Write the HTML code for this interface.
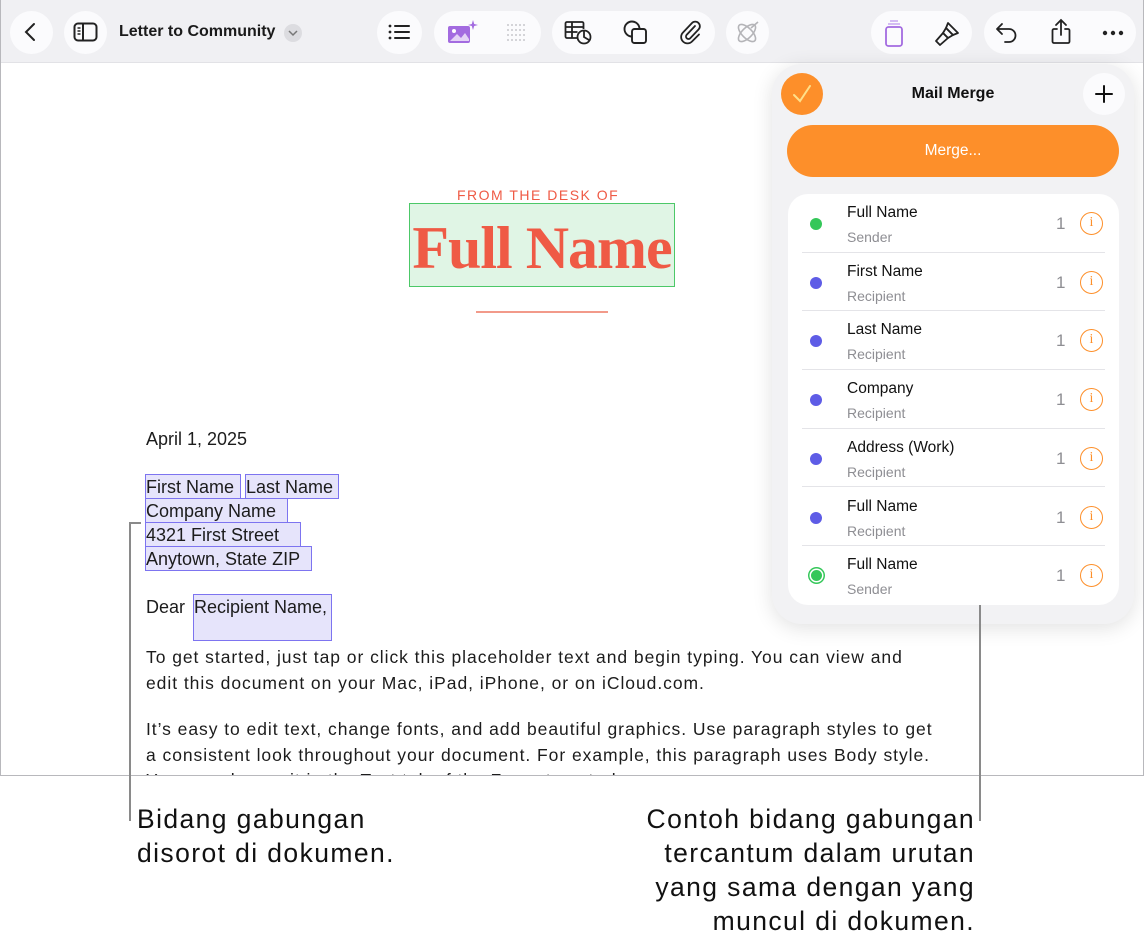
<!DOCTYPE html>
<html><head><meta charset="utf-8"><style>
*{margin:0;padding:0;box-sizing:border-box}
body{width:1144px;height:947px;background:#fff;position:relative;overflow:hidden;font-family:"Liberation Sans",sans-serif;color:#1a1a1a}
.abs{position:absolute}
.screen{position:absolute;left:0;top:0;width:1144px;height:776px;border:1px solid #b8b8bc;border-top:none;background:#fff;overflow:hidden}
.tb{position:absolute;left:0;top:0;width:1144px;height:63px;background:#f0f0f3;border-bottom:1px solid #e2e2e6}
.btn{position:absolute;top:11px;height:43px;background:#fbfbfd;border-radius:22px}
.ic{position:absolute}
.field{position:absolute;background:#e6e4fb;border:1.5px solid #7d74f0}
.t{position:absolute;font-size:18px;white-space:nowrap;color:#1c1c1c}
.panel{position:absolute;left:771px;top:64px;width:362px;height:560px;background:#f2f2f4;border-radius:30px;box-shadow:0 4px 20px rgba(0,0,0,.12)}
.card{position:absolute;left:16px;top:130px;width:331px;height:411px;background:#fff;border-radius:20px}
.row{position:absolute;left:0;width:331px;height:58.7px}
.row .dot{position:absolute;left:22px;top:24px;width:12px;height:12px;border-radius:50%;background:#5e5ce6}
.row .n{position:absolute;left:59px;top:10px;font-size:15.5px;color:#111}
.row .s{position:absolute;left:59px;top:35px;font-size:14px;color:#8e8e93}
.row .c{position:absolute;left:268px;top:20px;font-size:17px;color:#8e8e93}
.row .i{position:absolute;left:292px;top:18px;width:23px;height:23px;border:1.6px solid #fd8f2a;border-radius:50%;color:#fd8f2a;font-size:14px;text-align:center;line-height:20px;font-family:"Liberation Serif",serif}
.row .ln{position:absolute;left:14px;right:14px;bottom:0;height:1px;background:#e4e4e8}
.cap{position:absolute;font-size:26.5px;line-height:34px;color:#111;letter-spacing:1.4px}
.body{letter-spacing:0.95px}
</style></head><body>
<div class="screen">
<div class="tb">
 <div class="btn" style="left:9px;width:43px"></div>
 <svg class="ic" style="left:20px;top:22px" width="20" height="20"><path d="M13 2 L5 10 L13 18" fill="none" stroke="#222" stroke-width="2" stroke-linecap="round"/></svg>
 <div class="btn" style="left:63px;width:43px"></div>
 <svg class="ic" style="left:72px;top:22px" width="26" height="20"><rect x="1.5" y="1.5" width="22" height="17" rx="3.5" fill="none" stroke="#222" stroke-width="2"/><line x1="10" y1="2" x2="10" y2="18" stroke="#222" stroke-width="2"/><path d="M4.5 6h3M4.5 9h3M4.5 12h3" stroke="#222" stroke-width="1.5"/></svg>
 <div class="abs" style="left:118px;top:23px;font-size:16px;font-weight:bold;color:#1a1a1a">Letter to Community</div>
 <div class="abs" style="left:283px;top:24px;width:18px;height:18px;border-radius:50%;background:#dcdce0"></div>
 <svg class="ic" style="left:287px;top:28px" width="10" height="10"><path d="M1 3 L5 7 L9 3" fill="none" stroke="#777" stroke-width="1.5"/></svg>
 <div class="btn" style="left:376px;width:45px"></div>
 <svg class="ic" style="left:387px;top:23px" width="24" height="18"><g fill="#222"><circle cx="2" cy="3" r="1.4"/><circle cx="2" cy="9" r="1.4"/><circle cx="2" cy="15" r="1.4"/><rect x="6" y="2" width="16" height="2" rx="1"/><rect x="6" y="8" width="16" height="2" rx="1"/><rect x="6" y="14" width="16" height="2" rx="1"/></g></svg>
 <div class="btn" style="left:433px;width:107px"></div>
 <svg class="ic" style="left:446px;top:19px" width="32" height="26"><rect x="1" y="7" width="22" height="17" rx="2" fill="#a36be0"/><circle cx="7" cy="12" r="2" fill="#fff"/><path d="M3 22 L10 15 L14 19 L18 14 L22 20 V22Z" fill="#fff" opacity=".7"/><path d="M26 1 L27.2 5 L31 6 L27.2 7 L26 11 L24.8 7 L21 6 L24.8 5Z" fill="#a36be0"/></svg>
 <svg class="ic" style="left:505px;top:23px" width="22" height="20"><g fill="#c8c8cc"><circle cx="2" cy="2" r="1"/><circle cx="6" cy="2" r="1"/><circle cx="10" cy="2" r="1"/><circle cx="14" cy="2" r="1"/><circle cx="18" cy="2" r="1"/><circle cx="2" cy="7" r="1"/><circle cx="6" cy="7" r="1"/><circle cx="10" cy="7" r="1"/><circle cx="14" cy="7" r="1"/><circle cx="18" cy="7" r="1"/><circle cx="2" cy="12" r="1"/><circle cx="6" cy="12" r="1"/><circle cx="10" cy="12" r="1"/><circle cx="14" cy="12" r="1"/><circle cx="18" cy="12" r="1"/><circle cx="2" cy="17" r="1"/><circle cx="6" cy="17" r="1"/><circle cx="10" cy="17" r="1"/><circle cx="14" cy="17" r="1"/><circle cx="18" cy="17" r="1"/></g></svg>
 <div class="btn" style="left:551px;width:163px"></div>
 <svg class="ic" style="left:563px;top:20px" width="30" height="26"><g fill="none" stroke="#222" stroke-width="1.8"><path d="M14 18H3a1.5 1.5 0 0 1-1.5-1.5V3.5A1.5 1.5 0 0 1 3 2h15a1.5 1.5 0 0 1 1.5 1.5V9"/><path d="M1.5 7h18M1.5 12h12M8 2v16"/><circle cx="20" cy="17" r="6.5"/><path d="M20 10.5V17L25 20"/></g></svg>
 <svg class="ic" style="left:622px;top:20px" width="28" height="26"><g fill="none" stroke="#222" stroke-width="1.9"><circle cx="9" cy="9" r="7.5"/><rect x="9" y="9" width="14" height="14" rx="2.5" fill="#fbfbfd"/></g></svg>
 <svg class="ic" style="left:678px;top:19px" width="24" height="28"><path d="M16 7 L7.5 16 a2.5 2.5 0 0 0 3.5 3.5 L19.5 10.5 a4.5 4.5 0 0 0 -6.5 -6.5 L4 13.5 a6.3 6.3 0 0 0 9 9 L20 15.5" fill="none" stroke="#222" stroke-width="1.8" stroke-linecap="round"/></svg>
 <div class="btn" style="left:725px;width:43px"></div>
 <svg class="ic" style="left:733px;top:20px" width="28" height="26"><g fill="none" stroke="#b4b4b8" stroke-width="1.6"><ellipse cx="13" cy="13" rx="11" ry="5" transform="rotate(45 13 13)"/><ellipse cx="13" cy="13" rx="11" ry="5" transform="rotate(-45 13 13)"/><path d="M17 8 L24 2"/></g></svg>
 <div class="btn" style="left:870px;width:101px"></div>
 <svg class="ic" style="left:882px;top:18px" width="22" height="30"><rect x="3" y="9" width="16" height="19" rx="2.5" fill="none" stroke="#a36be0" stroke-width="1.8"/><path d="M5 6h12M7 3h8" stroke="#c8a8f0" stroke-width="1.6"/></svg>
 <svg class="ic" style="left:933px;top:19px" width="28" height="28"><g fill="none" stroke="#222" stroke-width="1.8" stroke-linejoin="round"><path d="M14 4 L24 14 L19 16 L12 9Z"/><path d="M12 9 L19 16 L14 19 L9 14Z"/><path d="M9 14 L14 19 L6 26 L2 22Z"/></g></svg>
 <div class="btn" style="left:983px;width:152px"></div>
 <svg class="ic" style="left:994px;top:21px" width="24" height="24"><path d="M7 3 L2 8 L7 13 M2 8 H14 a6.5 6.5 0 0 1 0 13 H10" fill="none" stroke="#222" stroke-width="1.8" stroke-linecap="round" stroke-linejoin="round"/></svg>
 <svg class="ic" style="left:1048px;top:18px" width="24" height="28"><g fill="none" stroke="#222" stroke-width="1.8" stroke-linecap="round"><path d="M12 2V17M7 7 L12 2 L17 7"/><path d="M8 11H5a1.5 1.5 0 0 0-1.5 1.5v11A1.5 1.5 0 0 0 5 25h14a1.5 1.5 0 0 0 1.5-1.5v-11A1.5 1.5 0 0 0 19 11h-3"/></g></svg>
 <svg class="ic" style="left:1101px;top:30px" width="22" height="6"><g fill="#222"><circle cx="3" cy="3" r="2.2"/><circle cx="11" cy="3" r="2.2"/><circle cx="19" cy="3" r="2.2"/></g></svg>
</div>

<div class="abs" style="left:456px;top:187px;font-size:14px;letter-spacing:1.5px;color:#ef5a45">FROM THE DESK OF</div>
<div class="abs" style="left:408px;top:203px;width:266px;height:84px;background:#e0f5e5;border:1.5px solid #4cc868"></div>
<div class="abs" style="left:408px;top:214px;width:266px;text-align:center;font-family:'Liberation Serif',serif;font-weight:bold;font-size:60px;color:#ef5a45;letter-spacing:-1px">Full Name</div>
<div class="abs" style="left:475px;top:311px;width:132px;height:2px;background:#f29a8a"></div>

<div class="t" style="left:145px;top:429px">April 1, 2025</div>
<div class="field" style="left:144px;top:474px;width:96px;height:25px"></div>
<div class="field" style="left:244px;top:474px;width:94px;height:25px"></div>
<div class="field" style="left:144px;top:498px;width:143px;height:25px"></div>
<div class="field" style="left:144px;top:522px;width:156px;height:25px"></div>
<div class="field" style="left:144px;top:546px;width:167px;height:25px"></div>
<div class="field" style="left:192px;top:594px;width:139px;height:47px"></div>
<div class="t" style="left:145px;top:477px">First Name</div>
<div class="t" style="left:245px;top:477px">Last Name</div>
<div class="t" style="left:145px;top:501px">Company Name</div>
<div class="t" style="left:145px;top:525px">4321 First Street</div>
<div class="t" style="left:145px;top:549px">Anytown, State ZIP</div>
<div class="t" style="left:145px;top:597px">Dear</div>
<div class="t" style="left:193px;top:597px">Recipient Name,</div>
<div class="t body" style="left:145px;top:644px;font-size:17.5px;line-height:26px">To get started, just tap or click this placeholder text and begin typing. You can view and<br>edit this document on your Mac, iPad, iPhone, or on iCloud.com.</div>
<div class="t body" style="left:145px;top:717px;font-size:17.5px;line-height:25.5px">It’s easy to edit text, change fonts, and add beautiful graphics. Use paragraph styles to get<br>a consistent look throughout your document. For example, this paragraph uses Body style.<br>You can change it in the Text tab of the Format controls.</div>

<div class="panel">
 <div class="abs" style="left:9px;top:9px;width:42px;height:42px;border-radius:50%;background:#fd8f2a"></div>
 <svg class="ic" style="left:19px;top:19px" width="22" height="22"><path d="M3 12 L9 18 L19 3" fill="none" stroke="#ffe08a" stroke-width="2" stroke-linecap="round"/></svg>
 <div class="abs" style="left:0;width:362px;top:21px;text-align:center;font-size:16px;font-weight:bold;color:#111">Mail Merge</div>
 <div class="abs" style="left:311px;top:9px;width:42px;height:42px;border-radius:50%;background:#fbfbfd"></div>
 <svg class="ic" style="left:322px;top:20px" width="20" height="20"><path d="M10 2V18M2 10H18" stroke="#111" stroke-width="2" stroke-linecap="round"/></svg>
 <div class="abs" style="left:15px;top:61px;width:332px;height:52px;border-radius:26px;background:#fd8f2a;color:#fff;font-size:15.5px;text-align:center;line-height:52px">Merge...</div>
 <div class="card">
  <div class="row" style="top:0"><div class="dot" style="background:#34c759"></div><div class="n">Full Name</div><div class="s">Sender</div><div class="c">1</div><div class="i">i</div><div class="ln"></div></div>
  <div class="row" style="top:58.7px"><div class="dot"></div><div class="n">First Name</div><div class="s">Recipient</div><div class="c">1</div><div class="i">i</div><div class="ln"></div></div>
  <div class="row" style="top:117.4px"><div class="dot"></div><div class="n">Last Name</div><div class="s">Recipient</div><div class="c">1</div><div class="i">i</div><div class="ln"></div></div>
  <div class="row" style="top:176.1px"><div class="dot"></div><div class="n">Company</div><div class="s">Recipient</div><div class="c">1</div><div class="i">i</div><div class="ln"></div></div>
  <div class="row" style="top:234.8px"><div class="dot"></div><div class="n">Address (Work)</div><div class="s">Recipient</div><div class="c">1</div><div class="i">i</div><div class="ln"></div></div>
  <div class="row" style="top:293.5px"><div class="dot"></div><div class="n">Full Name</div><div class="s">Recipient</div><div class="c">1</div><div class="i">i</div><div class="ln"></div></div>
  <div class="row" style="top:352.2px"><div class="dot" style="background:#34c759;box-shadow:0 0 0 1.5px #fff,0 0 0 3px #34c759;width:11px;height:11px;left:22.5px"></div><div class="n">Full Name</div><div class="s">Sender</div><div class="c">1</div><div class="i">i</div></div>
 </div>
</div>
</div>

<div class="abs" style="left:129px;top:522px;width:2px;height:299px;background:#8a8a8a"></div>
<div class="abs" style="left:129px;top:522px;width:12px;height:2px;background:#8a8a8a"></div>
<div class="abs" style="left:979px;top:605px;width:2px;height:216px;background:#8a8a8a"></div>

<div class="cap" style="left:137px;top:802px">Bidang gabungan<br>disorot di dokumen.</div>
<div class="cap" style="right:169px;top:802px;text-align:right">Contoh bidang gabungan<br>tercantum dalam urutan<br>yang sama dengan yang<br>muncul di dokumen.</div>
</body></html>
